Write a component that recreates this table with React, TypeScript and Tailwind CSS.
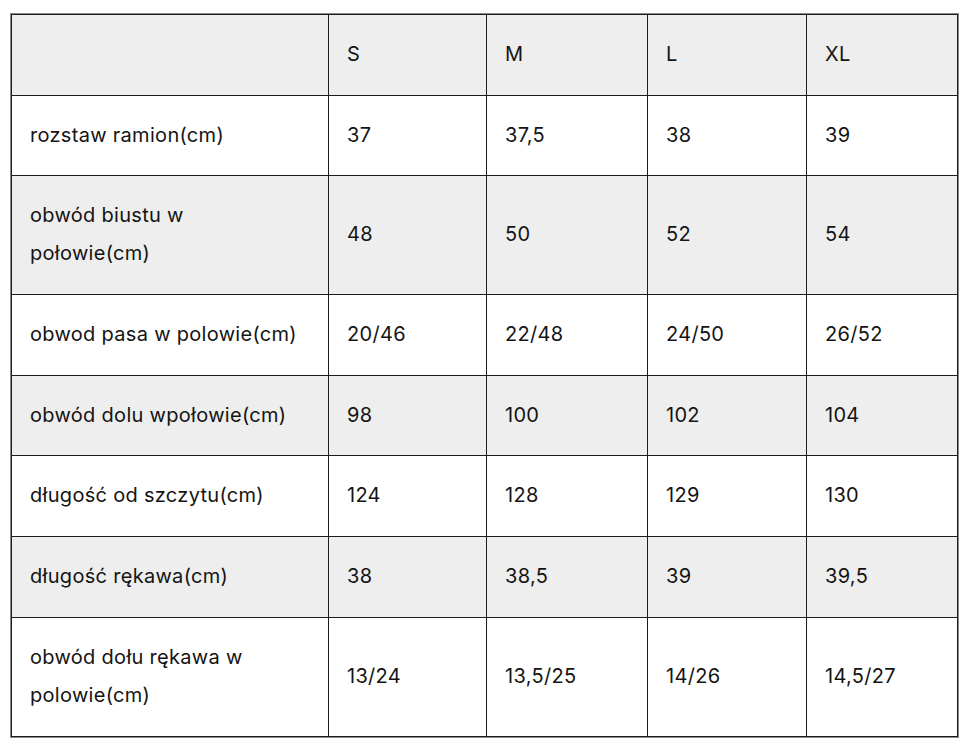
import React from "react";

const header = ["", "S", "M", "L", "XL"];
const rows: string[][] = [
  ["rozstaw ramion(cm)", "37", "37,5", "38", "39"],
  ["obwód biustu w\npołowie(cm)", "48", "50", "52", "54"],
  ["obwod pasa w polowie(cm)", "20/46", "22/48", "24/50", "26/52"],
  ["obwód dolu wpołowie(cm)", "98", "100", "102", "104"],
  ["długość od szczytu(cm)", "124", "128", "129", "130"],
  ["długość rękawa(cm)", "38", "38,5", "39", "39,5"],
  ["obwód dołu rękawa w\npolowie(cm)", "13/24", "13,5/25", "14/26", "14,5/27"],
];

export default function App() {
  const all = [header, ...rows];
  return (
    <div className="min-h-screen bg-white pt-[13px] pl-[10px]" style={{ fontFamily: "Inter, 'Noto Sans', sans-serif" }}>
      <div className="w-[949px] border border-[#8a8a8a]">
        <div className="grid grid-cols-[316px_157px_160px_158px_150px] grid-rows-[80px_79px_118px_80px_79px_80px_80px_118px] gap-px bg-[#1c1c1c] p-px">
          {all.map((r, i) =>
            r.map((c, j) => (
              <div
                key={`${i}-${j}`}
                className={`flex items-center whitespace-pre-line pl-[18px] pb-[2px] text-[20px] leading-[38px] tracking-[0.3px] text-[#141414] ${i % 2 === 0 ? "bg-[#eeeeee]" : "bg-white"}`}
              >
                {c}
              </div>
            ))
          )}
        </div>
      </div>
    </div>
  );
}
